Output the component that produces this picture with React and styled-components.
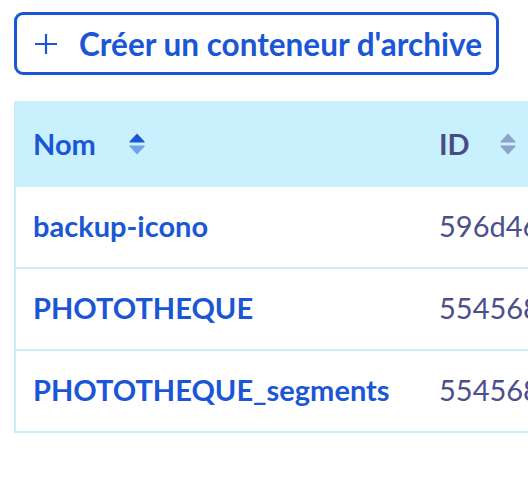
import React from "react";
import styled, { createGlobalStyle } from "styled-components";

const GlobalStyle = createGlobalStyle`
  html, body {
    margin: 0;
    padding: 0;
    background: #ffffff;
    overflow: hidden;
  }
  body {
    font-family: Lato, "Noto Sans", sans-serif;
  }
`;

const Page = styled.div`
  padding: 12px 0 0 14px;
  width: 900px;
`;

const CreateButton = styled.button`
  display: flex;
  align-items: center;
  gap: 21px;
  box-sizing: border-box;
  height: 63px;
  padding: 0 14px 0 17px;
  border: 3px solid #1a56d6;
  border-radius: 9px;
  background: #ffffff;
  color: #1a56d6;
  font-family: inherit;
  font-size: 31.5px;
  font-weight: 700;
  cursor: pointer;
`;

const Table = styled.table`
  margin-top: 26px;
  border-collapse: separate;
  border-spacing: 0;
  font-size: 29px;
  line-height: 34px;
  border-left: 2px solid #c9eefb;
`;

const HeadCell = styled.th`
  background: #c8f0fd;
  text-align: left;
  padding: 26px 19px 26px 17px;
  font-weight: 700;
  color: ${({ $active }) => ($active ? "#1a56d6" : "#474c85")};
  width: ${({ $w }) => $w || "auto"};
  white-space: nowrap;
`;

const HeadLabel = styled.span`
  display: flex;
  align-items: center;
  height: 34px;
`;

const Cell = styled.td`
  padding: 22px 19px 24px 17px;
  border-bottom: 2px solid #c9eefb;
  white-space: nowrap;
  font-weight: ${({ $name }) => ($name ? 700 : 400)};
  color: ${({ $name }) => ($name ? "#1a56d6" : "#4b4f8c")};
`;

const SortWrap = styled.span`
  display: block;
  height: 22px;
  margin-left: ${({ $gap }) => $gap}px;
`;

const PlusIcon = () => (
  <svg width="24" height="24" viewBox="0 0 24 24" aria-hidden="true">
    <path d="M12 2v20M1 12h22" stroke="#1a56d6" strokeWidth="2.2" fill="none" />
  </svg>
);

const SortIcon = ({ active, gap }) => (
  <SortWrap $gap={gap}>
    <svg width="16" height="22" viewBox="0 0 16 22" aria-hidden="true" style={{ display: "block" }}>
      <path
        d="M8 0.5 L15.5 8.5 Q16 9.5 15 9.5 H1 Q0 9.5 0.5 8.5 Z"
        fill={active ? "#1a56d6" : "#8da2c6"}
      />
      <path
        d="M8 21.5 L15.5 13.5 Q16 12.5 15 12.5 H1 Q0 12.5 0.5 13.5 Z"
        fill={active ? "#72a2ea" : "#8da2c6"}
      />
    </svg>
  </SortWrap>
);

const rows = [
  { name: "backup-icono", id: "596d46e7c1b84a2f9e03" },
  { name: "PHOTOTHEQUE", id: "554568a2f1d04c7b8e91" },
  { name: "PHOTOTHEQUE_segments", id: "554568b3e9c24f1a7d20" },
];

export default function App() {
  return (
    <>
      <GlobalStyle />
      <Page>
        <CreateButton type="button">
          <PlusIcon />
          Créer un conteneur d'archive
        </CreateButton>
        <Table>
          <thead>
            <tr>
              <HeadCell $active $w="370px">
                <HeadLabel>
                  Nom
                  <SortIcon active gap={33} />
                </HeadLabel>
              </HeadCell>
              <HeadCell>
                <HeadLabel>
                  ID
                  <SortIcon gap={30} />
                </HeadLabel>
              </HeadCell>
            </tr>
          </thead>
          <tbody>
            {rows.map((r) => (
              <tr key={r.name}>
                <Cell $name>{r.name}</Cell>
                <Cell>{r.id}</Cell>
              </tr>
            ))}
          </tbody>
        </Table>
      </Page>
    </>
  );
}
